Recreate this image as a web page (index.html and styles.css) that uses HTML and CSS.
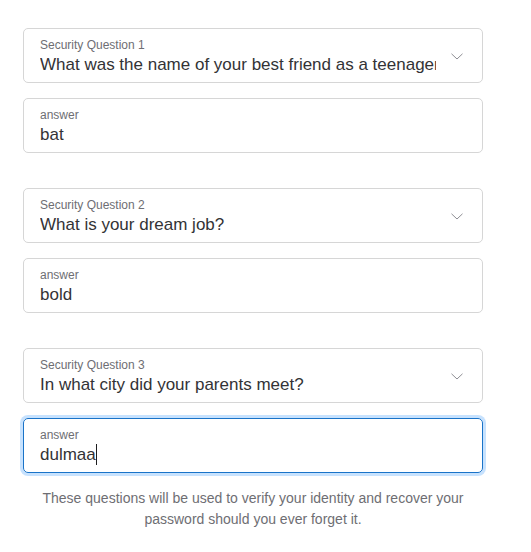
FILE: index.html
```html
<!DOCTYPE html>
<html>
<head>
<meta charset="utf-8">
<link rel="stylesheet" href="styles.css">
</head>
<body>
<div class="form">
  <div class="group">
    <div class="field select">
      <div class="label">Security Question 1</div>
      <div class="value">What was the name of your best friend as a teenager?</div>
      <svg class="chev" width="12" height="7" viewBox="0 0 12 7"><path d="M0.5 0.8 L6 6 L11.5 0.8" fill="none" stroke="#8e8e93" stroke-width="1"/></svg>
    </div>
    <div class="field">
      <div class="label">answer</div>
      <div class="value">bat</div>
    </div>
  </div>
  <div class="group">
    <div class="field select">
      <div class="label">Security Question 2</div>
      <div class="value">What is your dream job?</div>
      <svg class="chev" width="12" height="7" viewBox="0 0 12 7"><path d="M0.5 0.8 L6 6 L11.5 0.8" fill="none" stroke="#8e8e93" stroke-width="1"/></svg>
    </div>
    <div class="field">
      <div class="label">answer</div>
      <div class="value">bold</div>
    </div>
  </div>
  <div class="group">
    <div class="field select">
      <div class="label">Security Question 3</div>
      <div class="value">In what city did your parents meet?</div>
      <svg class="chev" width="12" height="7" viewBox="0 0 12 7"><path d="M0.5 0.8 L6 6 L11.5 0.8" fill="none" stroke="#8e8e93" stroke-width="1"/></svg>
    </div>
    <div class="field focus">
      <div class="label">answer</div>
      <div class="value">dulmaa<span class="caret"></span></div>
    </div>
  </div>
  <p class="note">These questions will be used to verify your identity and recover your password should you ever forget it.</p>
</div>
</body>
</html>
```
FILE: styles.css
```css
html, body {
  margin: 0;
  background: #fff;
}
body {
  font-family: "Liberation Sans", Arial, sans-serif;
  color: #333336;
}
.form {
  width: 460px;
  margin-left: 23px;
  padding-top: 28px;
  display: flex;
  flex-direction: column;
  gap: 35px;
}
.group {
  display: flex;
  flex-direction: column;
  gap: 15px;
}
.field {
  position: relative;
  box-sizing: border-box;
  height: 55px;
  border: 1px solid #d6d6d6;
  border-radius: 5px;
  padding: 8px 16px 0 16px;
}
.select {
  padding-right: 46px;
}
.label {
  font-size: 12px;
  line-height: 16px;
  color: #6e6e73;
}
.value {
  font-size: 17px;
  line-height: 24px;
  color: #333336;
  white-space: nowrap;
  overflow: hidden;
}
.chev {
  position: absolute;
  right: 19px;
  top: 24px;
}
.focus {
  border-color: #1a73c8;
  box-shadow: 0 0 0 3px rgba(0, 125, 250, 0.22);
}
.caret {
  display: inline-block;
  width: 1px;
  height: 21px;
  background: #1d1d1f;
  vertical-align: -5px;
}
.note {
  margin: -20px 0 0 0;
  text-align: center;
  font-size: 14px;
  line-height: 21px;
  color: #6e6e73;
}
```
